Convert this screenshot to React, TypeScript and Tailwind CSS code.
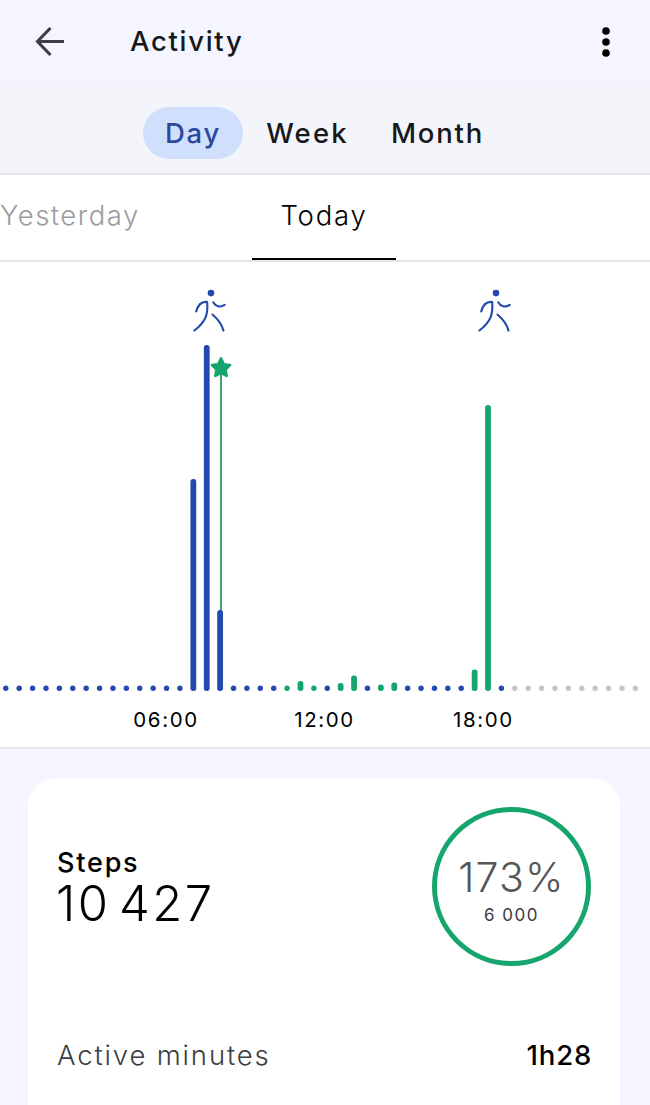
import React, { useState } from "react";

type Bar = { top?: number; color: string };

const BLUE = "#2449ae";
const GREEN = "#16a56c";
const GRAY = "#c4c5c8";

const dots = (count: number, color: string): Bar[] => Array.from({ length: count }, () => ({ color }));

// one entry per half hour, a bar without a top is drawn as a dot
const bars: Bar[] = [
  ...dots(14, BLUE),
  { top: 217, color: BLUE },
  { top: 83, color: BLUE },
  { top: 348, color: BLUE },
  ...dots(4, BLUE),
  { color: GREEN },
  { top: 419, color: GREEN },
  { color: GREEN },
  { color: BLUE },
  { top: 421, color: GREEN },
  { top: 413.5, color: GREEN },
  { color: BLUE },
  { top: 422.5, color: GREEN },
  { top: 420.5, color: GREEN },
  ...dots(5, BLUE),
  { top: 407.5, color: GREEN },
  { top: 143, color: GREEN },
  { color: BLUE },
  ...dots(10, GRAY),
];

const Walker: React.FC<{ x: number }> = ({ x }) => (
  <g transform={`translate(${x} 27)`} fill="none" stroke={BLUE} strokeWidth="2.1" strokeLinecap="round" strokeLinejoin="round">
    <circle cx="18.3" cy="4.1" r="3.3" fill={BLUE} stroke="none" />
    <path d="M3.5 22.5C5 17 8 12.2 14.5 13C15.4 25.5 13.2 32.5 1.7 41.5" />
    <path d="M20.5 13.3C23 17.7 27.5 18.7 32 15.9" />
    <path d="M19.8 25.5C25 30 29 35 30.8 41.6" />
  </g>
);

const Chart: React.FC = () => (
  <svg width="650" height="436" viewBox="0 0 650 436" className="block">
    <Walker x={192.7} />
    <Walker x={477.7} />
    <line x1="221" x2="221" y1="110" y2="352" stroke="#3fa57c" strokeWidth="2" />
    <path
      d="M221 96.5L223.7 102.3L230 103.1L225.4 107.5L226.6 113.8L221 110.8L215.4 113.8L216.6 107.5L212 103.1L218.3 102.3Z"
      fill={GREEN}
      stroke={GREEN}
      strokeWidth="2.8"
      strokeLinejoin="round"
    />
    {bars.map((bar, i) => {
      const x = 5.8 + i * 13.395;
      return bar.top ? (
        <rect key={i} x={x - 2.9} y={bar.top} width="5.8" height={429 - bar.top} rx="2.7" fill={bar.color} />
      ) : (
        <circle key={i} cx={x} cy="426.3" r="2.7" fill={bar.color} />
      );
    })}
  </svg>
);

const App: React.FC = () => {
  const [range, setRange] = useState("Day");

  const rangeClass = (name: string) =>
    range === name ? "bg-[#d0e0fc] text-[#2d479d]" : "text-[#17181c]";

  return (
    <div className="flex h-[1105px] w-[650px] flex-col overflow-hidden bg-[#f4f5fe] font-['Inter',sans-serif] text-black">
      <header className="h-[175px] shrink-0 border-b-2 border-[#e3e4e8] bg-linear-to-b from-[#f4f5fe] from-40% to-[#f4f5fa] to-60%">
        <div className="flex h-[83px] items-center pl-[35px] pr-[39px]">
          <svg width="30" height="30" viewBox="0 0 30 30" fill="none" stroke="#3c3d45" strokeWidth="3.1">
            <path d="M29 14.5H2.5M15.5 1L2.5 14.5L15.5 28" />
          </svg>
          <h1 className="ml-[65px] pt-px text-[27.5px] font-medium tracking-[1.7px] text-[#17181c]">Activity</h1>
          <svg width="10" height="30" viewBox="0 0 10 30" className="ml-auto">
            <circle cx="5" cy="4" r="3.8" />
            <circle cx="5" cy="15" r="3.8" />
            <circle cx="5" cy="26" r="3.8" />
          </svg>
        </div>
        <nav className="flex pl-[143px] pt-6 text-[27.5px] font-medium">
          <button onClick={() => setRange("Day")} className={`h-[52px] w-[100px] rounded-full pt-0.5 tracking-[1.7px] ${rangeClass("Day")}`}>
            Day
          </button>
          <button onClick={() => setRange("Week")} className={`h-[52px] w-[129px] rounded-full pt-0.5 tracking-[2.2px] ${rangeClass("Week")}`}>
            Week
          </button>
          <button onClick={() => setRange("Month")} className={`h-[52px] w-[131px] rounded-full pt-0.5 tracking-[1.8px] ${rangeClass("Month")}`}>
            Month
          </button>
        </nav>
      </header>

      <div className="flex h-[87px] shrink-0 border-b-2 border-[#e5e6e8] bg-white text-[27.5px] font-light">
        <div className="w-[252px] pt-5 tracking-[1.5px] text-[#9b9ca1]">Yesterday</div>
        <div className="h-[85px] w-[144px] border-b-2 border-black pt-5 text-center tracking-[1.8px]">Today</div>
      </div>

      <section className="h-[487px] shrink-0 border-b-2 border-[#e5e6ec] bg-white">
        <Chart />
        <div className="flex pl-[87px] pt-2 text-center text-[20.5px] leading-[28px] tracking-[1.6px]">
          <span className="w-[158px]">06:00</span>
          <span className="w-[159px]">12:00</span>
          <span className="w-[159px]">18:00</span>
        </div>
      </section>

      <main className="ml-7 mt-[29px] h-[400px] w-[592px] shrink-0 rounded-t-[28px] bg-white px-[29px] pt-[29px]">
        <div className="flex justify-between">
          <div className="pt-[38px]">
            <h2 className="text-[27px] font-medium leading-[36px] tracking-[1.8px]">Steps</h2>
            <p className="-ml-px text-[49px] font-light leading-[46px] tracking-[2.4px] [word-spacing:-7.5px]">10 427</p>
          </div>
          <div className="flex size-[159px] flex-col items-center rounded-full border-[5px] border-[#16a56c] pt-[42px]">
            <span className="text-[41px] font-light leading-[46px] tracking-[1.2px] text-[#55565a]">173%</span>
            <span className="mt-[2px] text-[17px] leading-[26px] tracking-[1.5px] text-[#3a3b3f]">6 000</span>
          </div>
        </div>
        <div className="flex justify-between pt-[69px] text-[27.5px] leading-[40px]">
          <span className="font-light tracking-[1.85px] text-[#3c3d41]">Active minutes</span>
          <span className="-mr-px font-medium tracking-[0.8px]">1h28</span>
        </div>
      </main>
    </div>
  );
};

export default App;
